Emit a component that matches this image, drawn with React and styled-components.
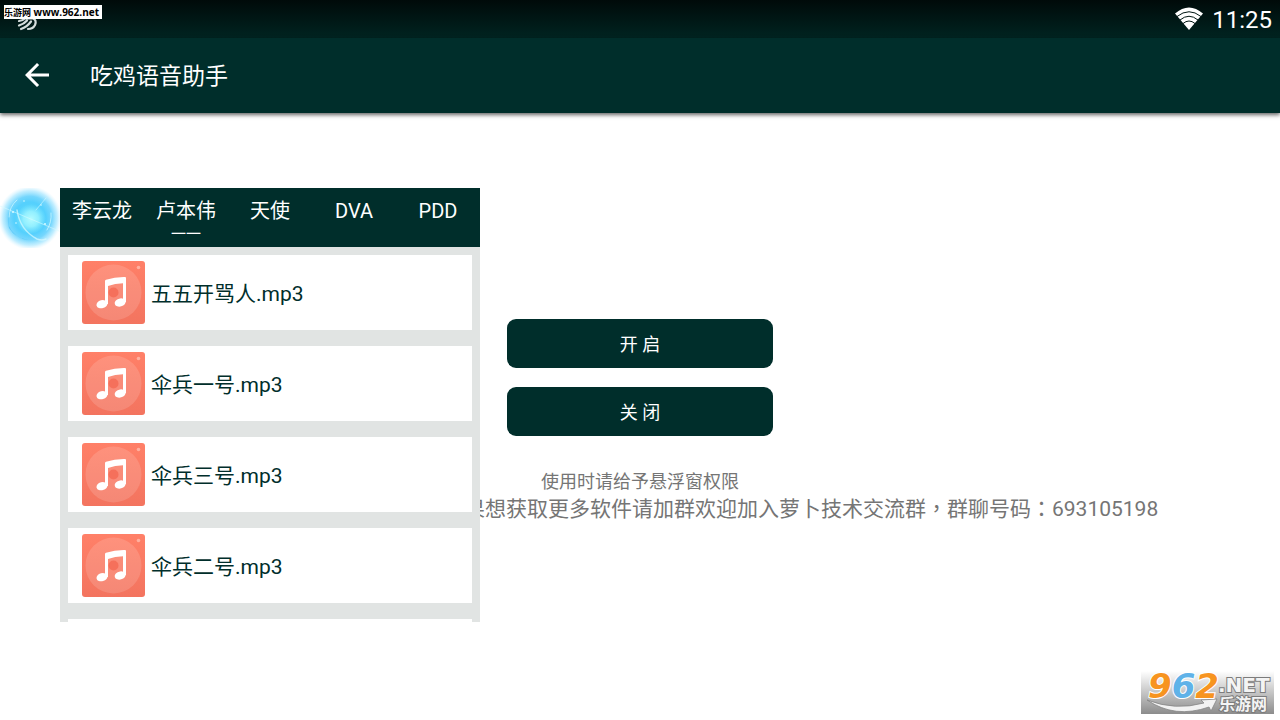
import styled, { createGlobalStyle } from 'styled-components';

const GlobalStyle = createGlobalStyle`
  * {
    box-sizing: border-box;
  }

  body {
    margin: 0;
    background: #ffffff;
    font-family: Roboto, "Noto Sans CJK SC", sans-serif;
  }
`;

const Page = styled.div`
  position: relative;
  min-height: 100vh;
  overflow: hidden;
`;

const StatusBar = styled.div`
  position: relative;
  display: flex;
  align-items: center;
  justify-content: flex-end;
  gap: 8px;
  height: 38px;
  padding: 0 8px;
  background: linear-gradient(#000a09, #002421);
  color: #ffffff;
`;

const StatusMark = styled.svg`
  margin-right: auto;
  margin-left: 8px;
  width: 22px;
  height: 24px;
`;

const Clock = styled.span`
  padding-top: 2px;
  font-size: 24px;
  line-height: 36px;
`;

const SiteTag = styled.span`
  position: absolute;
  top: 5px;
  left: 4px;
  width: 98px;
  height: 14px;
  background: #ffffff;
  color: #000000;
  font-family: "Open Sans", "Noto Sans CJK SC", sans-serif;
  font-size: 10px;
  font-weight: 700;
  line-height: 14px;
  white-space: nowrap;
`;

const SiteName = styled.span`
  font-size: 9px;
`;

const AppBar = styled.header`
  position: relative;
  display: flex;
  align-items: center;
  gap: 35px;
  height: 75px;
  padding: 0 19px;
  background: #002e2b;
  box-shadow: 0 2px 4px rgba(0, 0, 0, 0.6);
  color: #ffffff;
`;

const BackButton = styled.button`
  display: flex;
  padding: 0 0 2px;
  border: none;
  background: none;
  color: inherit;
  cursor: pointer;
`;

const Title = styled.h1`
  margin: 0;
  padding-top: 2px;
  font-size: 23px;
  font-weight: 400;
  line-height: 32px;
`;

const Main = styled.main`
  display: flex;
  flex-direction: column;
  align-items: center;
  padding-top: 206px;
`;

const Actions = styled.div`
  display: flex;
  flex-direction: column;
  gap: 19px;
  width: 266px;
  margin-bottom: 32px;
`;

const ActionButton = styled.button`
  height: 49px;
  padding: 0 0 2px;
  border: none;
  border-radius: 9px;
  background: #002e2b;
  color: #ffffff;
  font-family: inherit;
  font-size: 18px;
  cursor: pointer;
`;

const Hint = styled.p`
  margin: 0;
  color: #757575;
  font-size: 18px;
  line-height: 27px;
`;

const GroupHint = styled.p`
  align-self: stretch;
  margin: 0 0 0 calc(50% - 176px);
  color: #757575;
  font-size: 21px;
  line-height: 25px;
  white-space: nowrap;
`;

const Punct = styled.span`
  font-family: "Noto Sans CJK TC", sans-serif;
`;

// floating window that sits over the activity
const Floating = styled.section`
  position: absolute;
  top: 188px;
  left: 0;
  display: flex;
  align-items: flex-start;
`;

const OrbButton = styled.button`
  display: flex;
  width: 60px;
  height: 60px;
  padding: 0;
  border: none;
  background: none;
  cursor: pointer;
`;

const Panel = styled.div`
  width: 420px;
  height: 434px;
  overflow: hidden;
  background: #e1e4e3;
`;

const Tabs = styled.nav`
  display: grid;
  grid-template-columns: repeat(5, 1fr);
  height: 59px;
  background: #002e2b;
`;

const Tab = styled.button`
  display: flex;
  flex-direction: column;
  align-items: center;
  padding: 9px 0 0;
  border: none;
  background: none;
  color: #ffffff;
  font-family: inherit;
  font-size: 20px;
  line-height: 28px;
  white-space: nowrap;
  cursor: pointer;
`;

const TabMark = styled.span`
  font-size: 15px;
  line-height: 18px;
`;

const TrackList = styled.ul`
  display: flex;
  flex-direction: column;
  gap: 16px;
  margin: 0;
  padding: 8px;
  list-style: none;
`;

const Track = styled.li`
  display: flex;
  flex-shrink: 0;
  align-items: center;
  gap: 6px;
  height: 75px;
  padding: 0 14px;
  background: #ffffff;
`;

const TrackName = styled.span`
  padding-top: 2px;
  color: #002e2b;
  font-size: 21px;
  line-height: 30px;
`;

const Watermark = styled.svg`
  position: absolute;
  right: 6px;
  bottom: 6px;
`;

const LogoDigits = styled.text`
  font-family: "DejaVu Sans", sans-serif;
  font-size: 34px;
  font-style: italic;
  font-weight: 700;
  fill: #f7941f;
  stroke: #ffffff;
  stroke-width: 2px;
  paint-order: stroke;
`;

const LogoText = styled.text`
  font-family: "DejaVu Sans", "Noto Sans CJK SC", sans-serif;
  font-size: ${props => props.$size};
  font-weight: 700;
  fill: #f4f4f4;
  stroke: #7c7c7c;
  stroke-width: 2px;
  paint-order: stroke;
`;

const tabs = ['李云龙', '卢本伟', '天使', 'DVA', 'PDD'];
const tracks = ['五五开骂人.mp3', '伞兵一号.mp3', '伞兵三号.mp3', '伞兵二号.mp3', ''];

function WifiIcon() {
  return (
    <svg width="30" height="26" viewBox="0 0 30 26" fill="none">
      <path d="M1 7.500Q15-4.500 29 7.500L15 24Z" fill="#fff" />
      <path d="M3 10.500Q15 1 27 10.500M6 14Q15 6.500 24 14M9 17.500Q15 12.500 21 17.500" stroke="#001512" strokeWidth="1" />
    </svg>
  );
}

function MusicIcon() {
  return (
    <svg width="63" height="63" viewBox="0 0 63 63">
      <defs>
        <linearGradient id="cover" x1="0" y1="0" x2="0" y2="1">
          <stop offset="0" stopColor="#ff8068" />
          <stop offset="1" stopColor="#f3745f" />
        </linearGradient>
      </defs>
      <rect width="63" height="63" rx="3" fill="url(#cover)" />
      <circle cx="31.500" cy="31.500" r="28" fill="#fff" fillOpacity=".14" />
      <circle cx="31.500" cy="31.500" r="5" fill="#f5705b" />
      <circle cx="56.500" cy="6.500" r="1.800" fill="#ffb09f" />
      <g fill="#fff">
        <path d="M23 20Q23 19 24 18.700Q33 15.800 43 16Q44 16 44 17V41H41V22.300Q33 22.300 26 25V43H23Z" />
        <ellipse cx="20" cy="43.200" rx="5.600" ry="4" transform="rotate(-15 20 43.200)" />
        <ellipse cx="38.200" cy="41.500" rx="5.600" ry="4" transform="rotate(-15 38.200 41.500)" />
      </g>
    </svg>
  );
}

function OrbIcon() {
  return (
    <svg width="60" height="60" viewBox="0 0 60 60" fill="none">
      <defs>
        <radialGradient id="orb">
          <stop offset="0" stopColor="#5cdcfd" />
          <stop offset=".5" stopColor="#55d0fd" />
          <stop offset=".68" stopColor="#66d2fd" stopOpacity=".9" />
          <stop offset=".85" stopColor="#90e0ff" stopOpacity=".55" />
          <stop offset="1" stopColor="#c8efff" stopOpacity="0" />
        </radialGradient>
        <radialGradient id="core">
          <stop offset="0" stopColor="#b4fbff" />
          <stop offset=".5" stopColor="#98f2ff" stopOpacity=".9" />
          <stop offset="1" stopColor="#7fe6ff" stopOpacity="0" />
        </radialGradient>
      </defs>
      <circle cx="30" cy="30" r="32" fill="url(#orb)" />
      <path d="M9 38Q14 50 28 52Q15 50 9 40Q6 28 11 20Q7 30 9 38Z" fill="#2fb4f6" fillOpacity=".5" />
      <circle cx="31" cy="31" r="15" fill="url(#core)" />
      <g stroke="#d8fbff" strokeLinecap="round" strokeOpacity=".7">
        <path d="M17 22Q20 42 37 51Q42 53 46 51" strokeWidth="1.500" />
        <path d="M9 29Q9 19 17 12M51 25Q52 34 47 42" strokeWidth="1" />
        <path d="M0 18L59 43M36 22L46 10" strokeWidth=".8" />
      </g>
      <g fill="#d8fbff">
        <circle cx="13" cy="24" r="1" />
        <circle cx="16" cy="35" r=".8" />
        <circle cx="41" cy="17" r=".8" />
        <circle cx="45" cy="36" r="1" />
        <circle cx="24" cy="13" r=".8" />
      </g>
    </svg>
  );
}

export default function App() {
  return (
    <Page>
      <GlobalStyle />
      <StatusBar>
        <StatusMark viewBox="0 0 22 24" fill="none" stroke="#d5dedd" strokeWidth="2.200" strokeLinecap="round">
          <path d="M5 2H17V9H5ZM3 14Q7 13.500 9 11.500H17Q21 13 19 18Q17 22 12 22M11 13.500Q8 17 3 18.500M15 14.500Q11 20 5 22" />
        </StatusMark>
        <WifiIcon />
        <Clock>11:25</Clock>
        <SiteTag><SiteName>乐游网</SiteName> www.962.net</SiteTag>
      </StatusBar>
      <AppBar>
        <BackButton aria-label="返回">
          <svg width="36" height="36" viewBox="0 0 24 24" fill="currentColor">
            <path d="M20 11H7.830l5.590-5.590L12 4l-8 8 8 8 1.410-1.410L7.830 13H20v-2z" />
          </svg>
        </BackButton>
        <Title>吃鸡语音助手</Title>
      </AppBar>

      <Main>
        <Actions>
          <ActionButton>开 启</ActionButton>
          <ActionButton>关 闭</ActionButton>
        </Actions>
        <Hint>使用时请给予悬浮窗权限</Hint>
        <GroupHint>
          果想获取更多软件请加群欢迎加入萝卜技术交流群<Punct>，</Punct>群聊号码<Punct>：</Punct>693105198
        </GroupHint>
      </Main>

      <Floating>
        <OrbButton aria-label="悬浮球">
          <OrbIcon />
        </OrbButton>
        <Panel>
          <Tabs>
            {tabs.map((name, i) => (
              <Tab key={name}>
                {name}
                {i === 1 && <TabMark>一一</TabMark>}
              </Tab>
            ))}
          </Tabs>
          <TrackList>
            {tracks.map((name, i) => (
              <Track key={i}>
                <MusicIcon />
                <TrackName>{name}</TrackName>
              </Track>
            ))}
          </TrackList>
        </Panel>
      </Floating>

      <Watermark width="133" height="53" viewBox="0 -10 133 53">
        <defs>
          <linearGradient id="fade" x1="0" y1="0" x2="0" y2="1">
            <stop offset="0" stopColor="#fff" />
            <stop offset="1" stopColor="#8c8c8c" />
          </linearGradient>
        </defs>
        <rect width="133" height="43" fill="url(#fade)" />
        <path d="M6 29Q34 40 63 32L60 29L76 28L70 40L68 36Q34 48 6 29Z" fill="#f2f2f2" stroke="#858585" strokeWidth=".8" />
        <LogoDigits x="7" y="27">
          9<tspan fill="#5fb2e8">6</tspan>2
        </LogoDigits>
        <LogoText x="77" y="21" $size="20px">.NET</LogoText>
        <LogoText x="78" y="39" $size="16px">乐游网</LogoText>
      </Watermark>
    </Page>
  );
}
